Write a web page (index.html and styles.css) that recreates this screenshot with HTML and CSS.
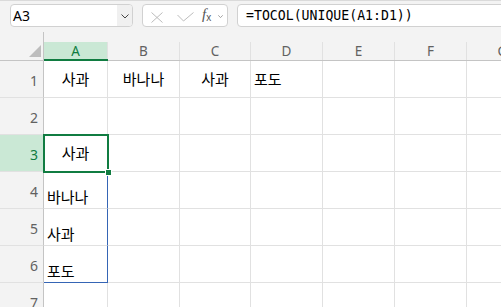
FILE: index.html
```html
<!DOCTYPE html>
<html lang="ko">
<head>
  <meta charset="UTF-8">
  <title>Sheet</title>
  <link rel="stylesheet" href="styles.css">
</head>
<body>

  <div class="toolbar">
    <div class="name-box">
      <span class="name-val">A3</span>
      <span class="name-drop">
        <svg width="8" height="5" viewBox="0 0 8 5"><polyline points="0.5,0.5 4,4 7.5,0.5" fill="none" stroke="#444" stroke-width="1"/></svg>
      </span>
    </div>
    <div class="fx-box">
      <svg class="ico-x" width="12" height="11" viewBox="0 0 12 11"><path d="M0.5 0.5 L11.5 10.5 M11.5 0.5 L0.5 10.5" stroke="#bcbcbc" stroke-width="1" fill="none"/></svg>
      <svg class="ico-check" width="17" height="10" viewBox="0 0 17 10"><polyline points="0.5,3 6.5,9 16.5,0.5" fill="none" stroke="#bcbcbc" stroke-width="1"/></svg>
      <span class="fx"><i>f</i><sub>x</sub></span>
      <svg class="ico-drop" width="5" height="3" viewBox="0 0 5 3"><polyline points="0.3,0.3 2.5,2.6 4.7,0.3" fill="none" stroke="#9a9a9a" stroke-width="0.9"/></svg>
    </div>
    <div class="formula">=TOCOL(UNIQUE(A1:D1))</div>
  </div>

  <div class="sheet">
    <!-- header row -->
    <div class="corner"><span class="tri"></span></div>
    <div class="col-head active"><span class="lbl">A</span></div>
    <div class="col-head"><span class="lbl">B</span></div>
    <div class="col-head"><span class="lbl">C</span></div>
    <div class="col-head"><span class="lbl">D</span></div>
    <div class="col-head"><span class="lbl">E</span></div>
    <div class="col-head"><span class="lbl">F</span></div>
    <div class="col-head"><span class="lbl">G</span></div>

    <!-- row 1 -->
    <div class="row-head">1</div>
    <div class="cell center">사과</div>
    <div class="cell center">바나나</div>
    <div class="cell center">사과</div>
    <div class="cell">포도</div>
    <div class="cell"></div>
    <div class="cell"></div>
    <div class="cell"></div>

    <!-- row 2 -->
    <div class="row-head">2</div>
    <div class="cell"></div>
    <div class="cell"></div>
    <div class="cell"></div>
    <div class="cell"></div>
    <div class="cell"></div>
    <div class="cell"></div>
    <div class="cell"></div>

    <!-- row 3 -->
    <div class="row-head active">3</div>
    <div class="cell center selected">사과<span class="handle"></span></div>
    <div class="cell"></div>
    <div class="cell"></div>
    <div class="cell"></div>
    <div class="cell"></div>
    <div class="cell"></div>
    <div class="cell"></div>

    <!-- row 4 -->
    <div class="row-head">4</div>
    <div class="cell bottom spill">바나나</div>
    <div class="cell"></div>
    <div class="cell"></div>
    <div class="cell"></div>
    <div class="cell"></div>
    <div class="cell"></div>
    <div class="cell"></div>

    <!-- row 5 -->
    <div class="row-head">5</div>
    <div class="cell bottom spill">사과</div>
    <div class="cell"></div>
    <div class="cell"></div>
    <div class="cell"></div>
    <div class="cell"></div>
    <div class="cell"></div>
    <div class="cell"></div>

    <!-- row 6 -->
    <div class="row-head">6</div>
    <div class="cell bottom spill spill-end">포도</div>
    <div class="cell"></div>
    <div class="cell"></div>
    <div class="cell"></div>
    <div class="cell"></div>
    <div class="cell"></div>
    <div class="cell"></div>

    <!-- row 7 -->
    <div class="row-head">7</div>
    <div class="cell"></div>
    <div class="cell"></div>
    <div class="cell"></div>
    <div class="cell"></div>
    <div class="cell"></div>
    <div class="cell"></div>
    <div class="cell"></div>
  </div>

</body>
</html>
```

FILE: styles.css
```css
* {
  margin: 0;
  padding: 0;
  box-sizing: border-box;
}

body {
  width: 501px;
  height: 307px;
  overflow: hidden;
  background: #fff;
  font-family: 'Noto Sans', sans-serif;
  color: #000;
}

/* formula bar */

.toolbar {
  display: flex;
  gap: 9px;
  height: 32px;
  padding: 3px 0 0 10px;
  background: #f3f3f3;
  border-top: 1px solid #dadada;
}

.name-box,
.fx-box,
.formula {
  height: 23px;
  background: #fff;
  border: 1px solid #d1d1d1;
  border-radius: 4px;
}

.name-box {
  width: 123px;
  display: flex;
  overflow: hidden;
}

.name-val {
  flex: 1;
  padding-left: 2px;
  font-size: 14px;
  line-height: 21px;
}

.name-drop {
  width: 15px;
  background: #f0f0f0;
  display: flex;
  align-items: center;
  justify-content: center;
  padding-top: 1px;
}

.fx-box {
  width: 86px;
  display: flex;
  align-items: center;
  padding-left: 8px;
}

.ico-x {
  margin-top: 3px;
}

.ico-check {
  margin: 3px 0 0 14px;
}

.fx {
  margin-left: 8px;
  font-family: 'Liberation Serif', serif;
  font-size: 15px;
  color: #555;
  line-height: 1;
  margin-top: -1px;
}

.fx sub {
  font-family: 'Liberation Sans', sans-serif;
  font-size: 10px;
  font-style: normal;
  vertical-align: -2px;
}

.ico-drop {
  margin-left: 7px;
  margin-top: 2px;
}

.formula {
  flex: 1;
  margin-right: -20px;
  padding-left: 8px;
  font-family: 'DejaVu Sans Mono', monospace;
  font-size: 13.2px;
  line-height: 21px;
}

/* grid */

.sheet {
  display: grid;
  grid-template-columns: 44px 64px 72px 71px 72px 72px 72px 72px;
  grid-template-rows: 29px repeat(7, 37px);
}

.corner {
  background: #f3f3f3;
  border-right: 1px solid #c4c4c4;
  border-bottom: 1px solid #c4c4c4;
  display: flex;
  align-items: flex-end;
  justify-content: flex-end;
  padding: 0 2px 3px 0;
}

.tri {
  width: 0;
  height: 0;
  border-left: 12px solid transparent;
  border-bottom: 12px solid #bdbdbd;
}

.col-head {
  background: #f3f3f3;
  border-bottom: 1px solid #c4c4c4;
  display: flex;
  align-items: flex-end;
}

.col-head .lbl {
  flex: 1;
  height: 18px;
  border-right: 1px solid #e1e1e1;
  text-align: center;
  font-size: 13.5px;
  line-height: 18px;
  color: #616161;
}

.col-head.active {
  border-bottom: 2px solid #107c41;
}

.col-head.active .lbl {
  height: 17px;
  background: #cae8d5;
  color: #107c41;
}

.row-head {
  background: #f3f3f3;
  border-right: 1px solid #c4c4c4;
  border-bottom: 1px solid #e1e1e1;
  display: flex;
  align-items: center;
  justify-content: flex-end;
  padding: 3px 5px 0 0;
  font-size: 14px;
  color: #616161;
}

.row-head.active {
  background: #cae8d5;
  color: #107c41;
}

.cell {
  border-right: 1px solid #e1e1e1;
  border-bottom: 1px solid #e1e1e1;
  display: flex;
  align-items: center;
  padding: 0 3px;
  font-family: 'Noto Sans CJK KR', sans-serif;
  font-size: 15px;
  line-height: 20px;
}

.cell.center {
  justify-content: center;
}

.cell.bottom {
  align-items: flex-end;
  padding-bottom: 1px;
}

.cell.spill {
  border-right-color: #3565b5;
}

.cell.spill-end {
  border-bottom-color: #3565b5;
}

.selected {
  position: relative;
}

.selected::after {
  content: '';
  position: absolute;
  top: -1px;
  left: -1px;
  right: -2px;
  bottom: -2px;
  border: 2px solid #107c41;
}

.handle {
  position: absolute;
  right: -5px;
  bottom: -5px;
  width: 7px;
  height: 7px;
  background: #107c41;
  border: 1px solid #fff;
  z-index: 2;
}
```
